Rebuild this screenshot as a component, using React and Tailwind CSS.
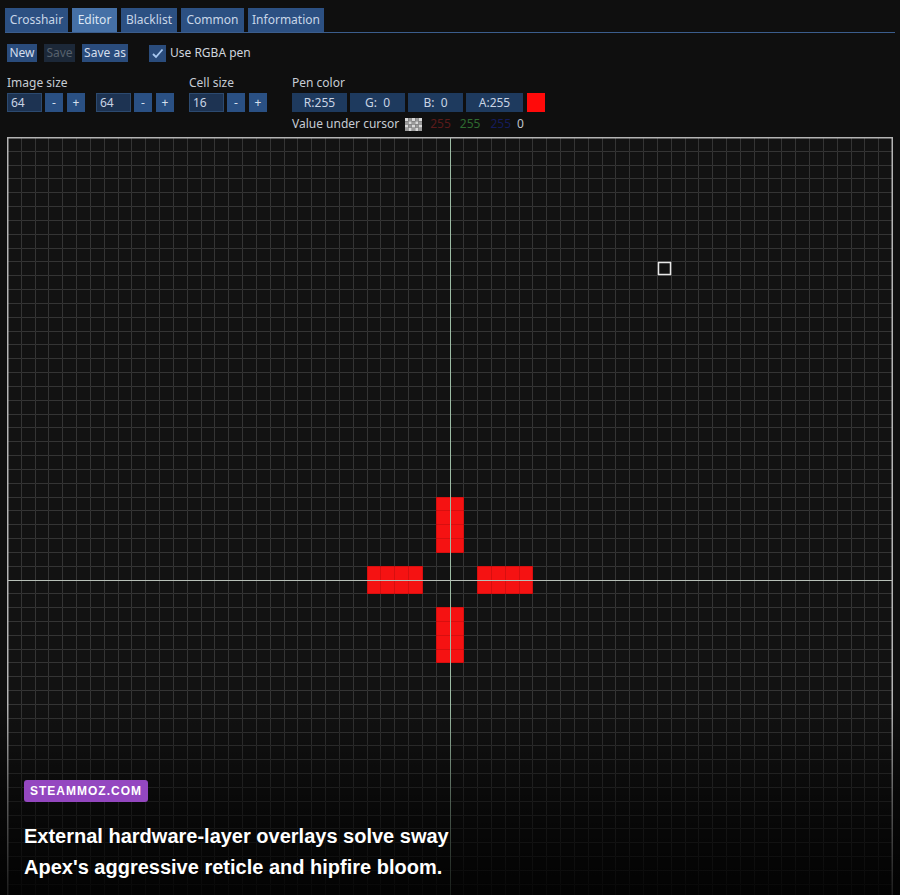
import React from 'react';

const CELLS = 64;
const SIZE = 885;
const STEP = SIZE / CELLS;

// painted cells [col, row]
const painted = [];
for (let r = 26; r <= 29; r++) { painted.push([31, r], [32, r]); }
for (let r = 34; r <= 37; r++) { painted.push([31, r], [32, r]); }
for (let c = 26; c <= 29; c++) { painted.push([c, 31], [c, 32]); }
for (let c = 34; c <= 37; c++) { painted.push([c, 31], [c, 32]); }

const tabs = [
  { name: 'Crosshair', w: 'w-[63px]' },
  { name: 'Editor', w: 'w-[45px]', active: true },
  { name: 'Blacklist', w: 'w-[56px]' },
  { name: 'Common', w: 'w-[63px]' },
  { name: 'Information', w: 'w-[76px]' },
];

const PixelGrid = () => {
  const lines = [];
  for (let i = 1; i < CELLS; i++) {
    if (i === 32) continue;
    const p = Math.round(i * STEP) + 0.5;
    lines.push(<line key={'v' + i} x1={p} y1={0} x2={p} y2={SIZE} />);
    lines.push(<line key={'h' + i} x1={0} y1={p} x2={SIZE} y2={p} />);
  }
  const mid = Math.round(32 * STEP) + 0.5;
  return (
    <svg width={SIZE + 1} height={SIZE + 1} className="block">
      <rect x="0" y="0" width={SIZE + 1} height={SIZE + 1} fill="#121212" />
      <g stroke="#3c3c3c" strokeWidth="1">{lines}</g>
      {painted.map(([c, r]) => (
        <rect
          key={c + '-' + r}
          x={Math.round(c * STEP)}
          y={Math.round(r * STEP)}
          width={Math.round((c + 1) * STEP) - Math.round(c * STEP) + 1}
          height={Math.round((r + 1) * STEP) - Math.round(r * STEP) + 1}
          fill="#f51212"
        />
      ))}
      {/* faint cell seams over the paint */}
      <g stroke="#000" strokeOpacity="0.12" strokeWidth="1">{lines}</g>
      <line x1={mid} y1={0} x2={mid} y2={SIZE} stroke="#9cbca4" strokeWidth="1" />
      <line x1={0} y1={mid} x2={SIZE} y2={mid} stroke="#b8c0b8" strokeWidth="1" />
      <rect
        x={Math.round(47 * STEP) + 1.5}
        y={Math.round(9 * STEP) + 1.5}
        width={12}
        height={12}
        fill="none"
        stroke="#e8e8e8"
        strokeWidth="1.5"
      />
      <rect x="0.75" y="0.75" width={SIZE - 0.5} height={SIZE - 0.5} fill="none" stroke="#b4b4b4" strokeWidth="1.5" />
    </svg>
  );
};

const Checker = () => (
  <svg width="17" height="13" className="block">
    {[0, 1, 2, 3].map(r =>
      [0, 1, 2, 3, 4].map(c => (
        <rect key={r + '' + c} x={c * 3.4} y={r * 3.25} width="3.4" height="3.25" fill={(r + c) % 2 ? '#9a9a9a' : '#d8d8d8'} />
      ))
    )}
  </svg>
);

const Field = ({ value, w }) => (
  <div className={`${w} h-[19px] bg-[#1d3352] border border-[#2c4a70] text-[#c9d4e4] text-[12px] leading-[17px] pl-[3px]`}>
    {value}
  </div>
);

const Step = ({ label }) => (
  <div className="w-[18px] h-[19px] bg-[#2a5083] text-[#d6e0ee] text-[12px] leading-[19px] text-center">{label}</div>
);

const PenBox = ({ label, w }) => (
  <div className={`${w} h-[19px] bg-[#1e3a5e] text-[#c9d4e4] text-[12px] leading-[19px] text-center whitespace-pre`}>{label}</div>
);

export default function App() {
  return (
    <div className="relative w-[900px] h-[895px] overflow-hidden bg-[#0f0f0f] font-['Noto_Sans',sans-serif]">
      {/* Tabs */}
      <div className="flex gap-[4px] pt-[8px] border-b border-[#3b5d8c] ml-[5px] mr-[5px]">
        {tabs.map(t => (
          <div
            key={t.name}
            className={`${t.w} h-[24px] text-[12px] leading-[24px] text-center ${t.active ? 'bg-[#4570a6] text-[#dbe6f4]' : 'bg-[#2c5082] text-[#c8d6e8]'}`}
          >
            {t.name}
          </div>
        ))}
      </div>

      {/* Toolbar */}
      <div className="flex items-center mt-[11px] pl-[7px] h-[18px]">
        <div className="w-[30px] h-[18px] bg-[#2a4c7c] text-[#d4deec] text-[12px] leading-[18px] text-center">New</div>
        <div className="ml-[7px] w-[31px] h-[18px] bg-[#1c2838] text-[#56606c] text-[12px] leading-[18px] text-center">Save</div>
        <div className="ml-[7px] w-[46px] h-[18px] bg-[#2a4c7c] text-[#d4deec] text-[12px] leading-[18px] text-center">Save as</div>
        <div className="ml-[21px] w-[17px] h-[17px] bg-[#2a4c7c] flex items-center justify-center">
          <svg width="13" height="13" viewBox="0 0 13 13">
            <path d="M2 7 L5 10 L11.5 2.5" fill="none" stroke="#a8c8f0" strokeWidth="1.8" />
          </svg>
        </div>
        <div className="ml-[4px] text-[12px] text-[#d0d6de]">Use RGBA pen</div>
      </div>

      {/* Settings row */}
      <div className="flex mt-[13px] pl-[7px] h-[62px]">
        <div className="w-[182px] flex flex-col">
          <div className="text-[12px] leading-[16px] text-[#c6ccd4]">Image size</div>
          <div className="flex mt-[2px]">
            <Field value="64" w="w-[35px]" />
            <div className="ml-[3px]"><Step label="-" /></div>
            <div className="ml-[4px]"><Step label="+" /></div>
            <div className="ml-[11px]"><Field value="64" w="w-[35px]" /></div>
            <div className="ml-[3px]"><Step label="-" /></div>
            <div className="ml-[4px]"><Step label="+" /></div>
          </div>
        </div>
        <div className="w-[103px] flex flex-col">
          <div className="text-[12px] leading-[16px] text-[#c6ccd4]">Cell size</div>
          <div className="flex mt-[2px]">
            <Field value="16" w="w-[35px]" />
            <div className="ml-[3px]"><Step label="-" /></div>
            <div className="ml-[4px]"><Step label="+" /></div>
          </div>
        </div>
        <div className="flex flex-col">
          <div className="text-[12px] leading-[16px] text-[#c6ccd4]">Pen color</div>
          <div className="flex mt-[2px] gap-[3px]">
            <PenBox label="R:255" w="w-[55px]" />
            <PenBox label="G:  0" w="w-[55px]" />
            <PenBox label="B:  0" w="w-[55px]" />
            <PenBox label="A:255" w="w-[57px]" />
            <div className="ml-[1px] w-[18px] h-[19px] bg-[#ff0a0a]" />
          </div>
          <div className="flex items-center mt-[5px] h-[14px] text-[12px]">
            <span className="text-[#c6ccd4]">Value under cursor</span>
            <span className="ml-[6px]"><Checker /></span>
            <span className="ml-[8px] text-[#5a1a1a]">255</span>
            <span className="ml-[9px] text-[#2e6a30]">255</span>
            <span className="ml-[10px] text-[#141c5c]">255</span>
            <span className="ml-[6px] text-[#c0c6ce]">0</span>
          </div>
        </div>
      </div>

      {/* Canvas */}
      <div className="ml-[7px]">
        <PixelGrid />
      </div>

      {/* Caption overlay */}
      <div className="absolute left-0 right-0 bottom-0 h-[190px] bg-linear-to-b from-transparent via-black/50 to-black/85" />
      <div className="absolute left-[24px] top-[780px] font-['Liberation_Sans',Arial,sans-serif]">
        <div className="w-fit bg-[#9447c0] rounded-[3px] px-[6px] h-[22px] leading-[22px] text-white text-[12px] font-bold tracking-[1px]">
          STEAMMOZ.COM
        </div>
        <div className="mt-[19px] text-white text-[20px] font-bold leading-[31px]">
          <div>External hardware-layer overlays solve sway</div>
          <div>Apex's aggressive reticle and hipfire bloom.</div>
        </div>
      </div>
    </div>
  );
}
